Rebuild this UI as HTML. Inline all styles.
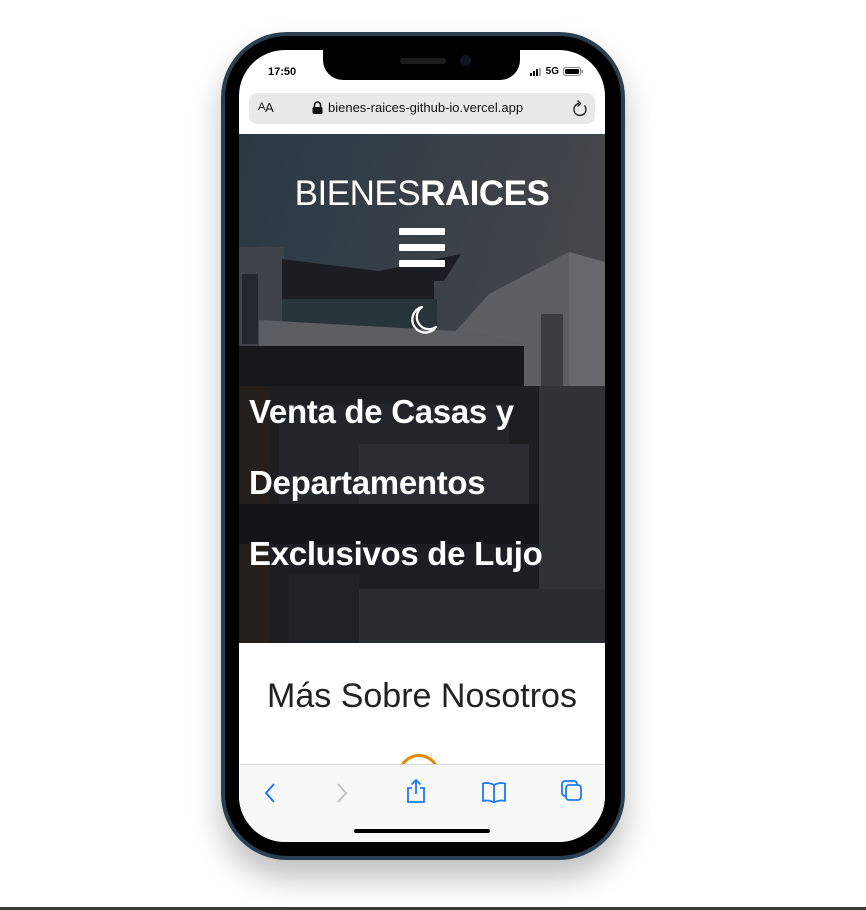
<!DOCTYPE html>
<html><head><meta charset="utf-8">
<style>
html,body{margin:0;padding:0;width:866px;height:910px;background:#fff;overflow:hidden;font-family:"Liberation Sans",sans-serif;}
.bottomline{position:absolute;left:0;top:907px;width:866px;height:3px;background:#3a3a3a;}
.frame{position:absolute;left:221px;top:32px;width:404px;height:828px;border-radius:66px;background:#2b3f52;box-shadow:0 18px 30px rgba(0,0,0,.25);}
.bezel{position:absolute;left:225px;top:36px;width:396px;height:820px;border-radius:62px;background:#000;}
.screen{position:absolute;left:239px;top:50px;width:366px;height:792px;border-radius:46px;background:#fff;overflow:hidden;}
.notch{position:absolute;left:84px;top:0;width:197px;height:30px;background:#000;border-radius:0 0 20px 20px;}
.speaker{position:absolute;left:77px;top:8px;width:46px;height:6px;border-radius:3px;background:#1c1c1c;}
.cam{position:absolute;left:137px;top:5px;width:11px;height:11px;border-radius:50%;background:#0f1420;}
.time{position:absolute;left:29px;top:16px;font-size:11px;font-weight:bold;color:#000;}
.status{position:absolute;right:22px;top:16px;font-size:10px;font-weight:bold;display:flex;align-items:center;gap:4px;}
.url{position:absolute;left:10px;top:43px;width:346px;height:31px;border-radius:8px;background:#e9e9e9;font-size:13px;color:#111;}
.hero{position:absolute;left:0;top:84px;width:366px;height:509px;overflow:hidden;}
.logo{position:absolute;left:0;width:366px;top:40px;text-align:center;color:#fff;font-size:35px;letter-spacing:-0.5px;}
.logo span.l{font-weight:300;}
.logo span.b{font-weight:bold;}
.bars{position:absolute;left:160px;top:94px;width:46px;}
.bars div{height:7px;background:#fff;margin-bottom:9px;border-radius:1px;}
h1{position:absolute;left:10px;top:242px;margin:0;color:#fff;font-size:33px;line-height:71px;font-weight:bold;letter-spacing:-0.3px;}
.content{position:absolute;left:0;top:593px;width:366px;height:121px;background:#fff;}
.content h2{margin:0;position:absolute;top:34px;width:366px;text-align:center;font-weight:300;font-size:34px;color:#222;}
.ring{position:absolute;left:159px;top:111px;width:36px;height:36px;border:3px solid #e08a00;border-radius:50%;}
.toolbar{position:absolute;left:0;top:714px;width:366px;height:78px;background:#f8f8f8;border-top:1px solid #d8d8d8;}
.home{position:absolute;left:115px;top:64px;width:136px;height:4px;border-radius:2px;background:#000;}
</style></head><body>
<div class="frame"></div>
<div class="bezel"></div>
<div class="screen">
  <div class="time">17:50</div>
  <div class="status">
    <svg width="12" height="8"><rect x="0" y="5" width="2" height="3"/><rect x="3" y="3" width="2" height="5"/><rect x="6" y="1" width="2" height="7"/><rect x="9" y="0" width="2" height="8" fill="#aaa"/></svg>
    <span>5G</span>
    <svg width="20" height="9"><rect x="0.5" y="0.5" width="17" height="8" rx="2" fill="none" stroke="#888"/><rect x="2" y="2" width="14" height="5" rx="1"/><rect x="18.5" y="3" width="1.5" height="3" fill="#888"/></svg>
  </div>
  <div class="notch"><div class="speaker"></div><div class="cam"></div></div>
  <div class="url">
    <span style="position:absolute;left:9px;top:8px;font-size:11px;">A</span><span style="position:absolute;left:16px;top:7px;font-size:13px;">A</span>
    <svg style="position:absolute;left:63px;top:8px" width="11" height="13"><path d="M2.5 6V4a3 3 0 0 1 6 0v2" fill="none" stroke="#111" stroke-width="1.6"/><rect x="0.5" y="6" width="10" height="7" rx="1.5" fill="#111"/></svg>
    <span style="position:absolute;left:79px;top:7px;">bienes-raices-github-io.vercel.app</span>
    <svg style="position:absolute;left:322px;top:6px" width="18" height="19"><path d="M13.5 6.5A6 6 0 1 1 8 4.5" fill="none" stroke="#222" stroke-width="1.4"/><path d="M6.5 1.5l3 3-3 3" fill="none" stroke="#222" stroke-width="1.4"/></svg>
  </div>
  <div class="hero">
    <svg width="366" height="509" style="position:absolute;left:0;top:0">
      <defs><linearGradient id="sky" x1="0" y1="0" x2="1" y2="0.4"><stop offset="0" stop-color="#2a3844"/><stop offset="1" stop-color="#46484b"/></linearGradient></defs>
      <rect width="366" height="509" fill="url(#sky)"/>
      <polygon points="205,210 250,160 330,118 366,128 366,509 205,509" fill="#5c6064"/>
      <polygon points="330,118 366,128 366,509 330,509" fill="#65696d"/>
      <rect x="302" y="180" width="22" height="329" fill="#3a3e42"/>
      <rect x="0" y="113" width="45" height="100" fill="#3d4349"/>
      <rect x="3" y="140" width="16" height="70" fill="#22282e"/>
      <polygon points="43,125 140,137 222,120 205,147 195,147 195,200 43,200" fill="#1a1e22"/>
      <rect x="43" y="165" width="155" height="37" fill="#29333a"/>
      <polygon points="20,186 235,198 285,210 285,222 20,212" fill="#5a5e62"/>
      <rect x="0" y="212" width="285" height="40" fill="#15171a"/>
      <rect x="0" y="252" width="366" height="257" fill="#1c1e22"/>
      <rect x="0" y="252" width="30" height="257" fill="#251f1c"/>
      <rect x="40" y="270" width="230" height="100" fill="#222529"/>
      <rect x="120" y="310" width="170" height="60" fill="#2a2e32"/>
      <rect x="0" y="370" width="300" height="40" fill="#121417"/>
      <rect x="300" y="252" width="66" height="257" fill="#303336"/>
      <rect x="120" y="455" width="246" height="54" fill="#2a2d30"/>
      <rect x="50" y="440" width="70" height="69" fill="#1f2224"/>
    </svg>
    <div class="logo"><span class="l">BIENES</span><span class="b">RAICES</span></div>
    <div class="bars"><div></div><div></div><div></div></div>
    <svg style="position:absolute;left:167px;top:170px" width="34" height="34"><path d="M16 3A13 13 0 1 0 30 23A10 10 0 0 1 16 3Z" fill="none" stroke="#fff" stroke-width="2.3" stroke-linejoin="round"/></svg>
    <h1>Venta de Casas y<br>Departamentos<br>Exclusivos de Lujo</h1>
  </div>
  <div class="content"><h2>Más Sobre Nosotros</h2><div class="ring"></div></div>
  <div class="toolbar">
    <svg style="position:absolute;left:24px;top:17px" width="14" height="22"><path d="M11 2L3 11l8 9" fill="none" stroke="#1a7cf5" stroke-width="2"/></svg>
    <svg style="position:absolute;left:96px;top:17px" width="14" height="22"><path d="M3 2l8 9-8 9" fill="none" stroke="#c4c4c4" stroke-width="2"/></svg>
    <svg style="position:absolute;left:166px;top:13px" width="22" height="26"><path d="M7 10H3v14h16V10h-4" fill="none" stroke="#1a7cf5" stroke-width="1.8"/><path d="M11 16V2M6.5 6.5L11 2l4.5 4.5" fill="none" stroke="#1a7cf5" stroke-width="1.8"/></svg>
    <svg style="position:absolute;left:242px;top:16px" width="26" height="22"><path d="M13 4C10 2 5 1.5 2 2.5V20c3-1 8-.5 11 1.5C16 19.5 21 19 24 20V2.5C21 1.5 16 2 13 4Z M13 4V21.5" fill="none" stroke="#1a7cf5" stroke-width="1.8" stroke-linejoin="round"/></svg>
    <svg style="position:absolute;left:321px;top:14px" width="24" height="24"><rect x="2" y="2" width="15" height="15" rx="3" fill="none" stroke="#1a7cf5" stroke-width="1.8"/><rect x="6" y="6" width="15" height="15" rx="3" fill="#f8f8f8" stroke="#1a7cf5" stroke-width="1.8"/></svg>
    <div class="home"></div>
  </div>
</div>
<div class="bottomline"></div>
</body></html>
